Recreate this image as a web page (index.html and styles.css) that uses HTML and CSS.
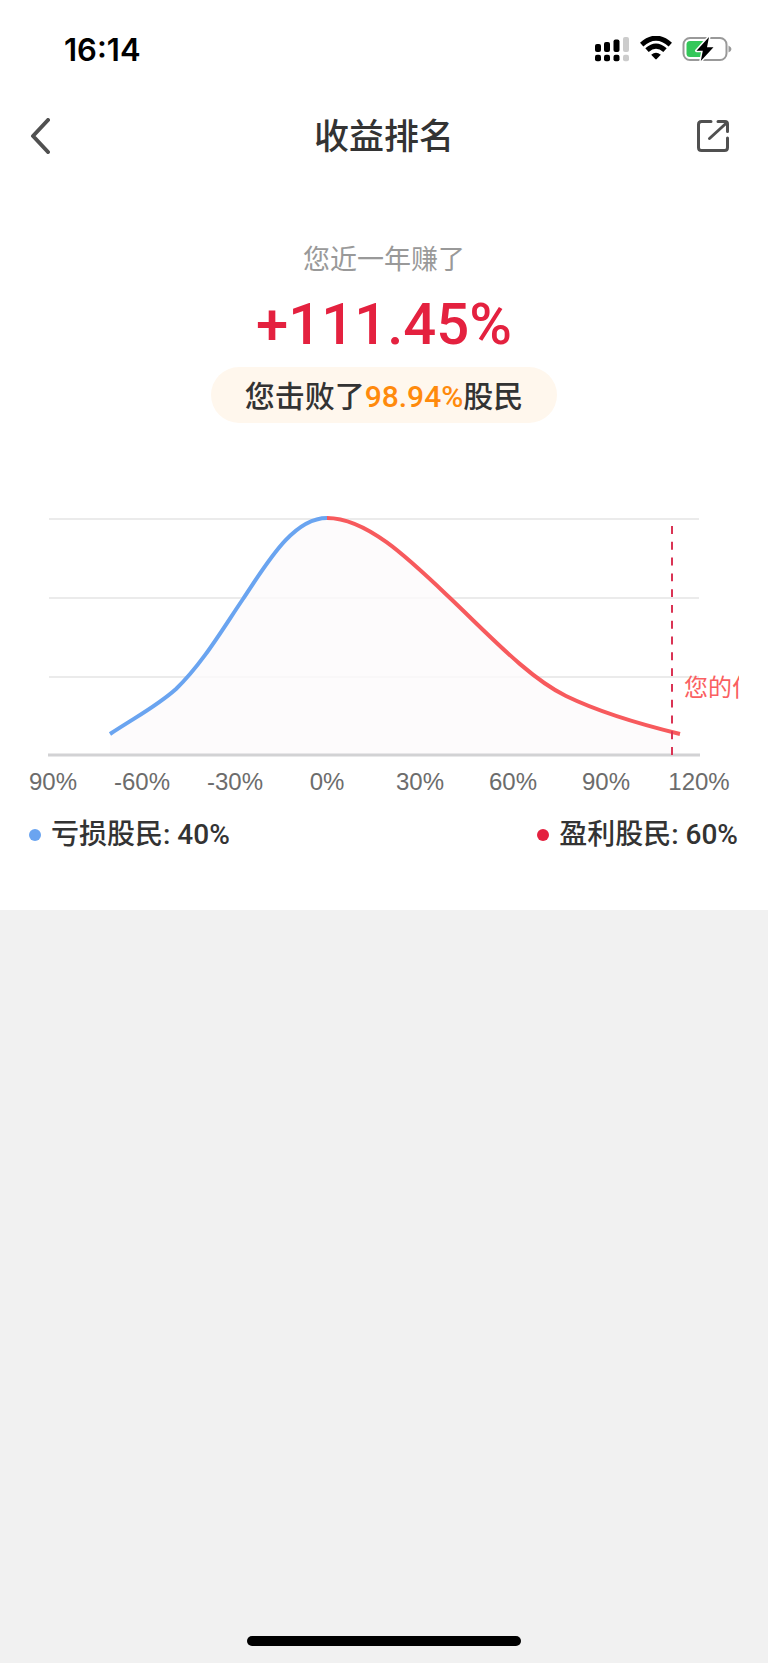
FILE: index.html
```html
<!DOCTYPE html>
<html lang="zh-CN">
<head>
    <meta charset="UTF-8">
    <meta name="viewport" content="width=device-width, initial-scale=1.0">
    <title>收益排名</title>
    <link rel="stylesheet" href="styles.css">
</head>
<body>

    <div class="card">
        <!-- Status bar -->
        <div class="status-bar">
            <span class="time">16:14</span>
            <div class="status-icons">
                <svg width="35" height="26" viewBox="0 0 35 26">
                    <rect x="0" y="8" width="6" height="8" rx="2"/>
                    <rect x="9" y="6" width="6" height="10" rx="2"/>
                    <rect x="18.5" y="3.5" width="6" height="12.5" rx="2"/>
                    <rect class="dim" x="28" y="1" width="6" height="15" rx="2"/>
                    <rect x="0" y="18.7" width="6" height="6.5" rx="2"/>
                    <rect x="9" y="18.7" width="6" height="6.5" rx="2"/>
                    <rect x="18.5" y="18.7" width="6" height="6.5" rx="2"/>
                    <rect class="dim" x="28" y="18.7" width="6" height="6.5" rx="2"/>
                </svg>
                <svg width="32" height="26" viewBox="0 0 32 26">
                    <path class="wifi" d="M1.7 8.6 Q16 -4.2 30.3 8.6"/>
                    <path class="wifi" d="M7 14.2 Q16 6 25 14.2"/>
                    <path d="M11.2 18.8 Q16 14.7 20.8 18.8 L16.7 23.1 Q16 23.7 15.3 23.1 Z"/>
                </svg>
                <svg width="50" height="26" viewBox="0 0 50 26">
                    <rect class="shell" x="1.5" y="2" width="43" height="22" rx="6.5"/>
                    <path class="nub" d="M46.5 9.5 Q49.5 11 49.5 13 Q49.5 15 46.5 16.5 Z"/>
                    <rect class="charge" x="4.5" y="5" width="19" height="16" rx="3.5"/>
                    <path class="bolt" d="M27 1 L14.5 14.7 H20.8 L18.8 25 L31.5 11.3 H25 Z"/>
                </svg>
            </div>
        </div>

        <!-- Title bar -->
        <header class="navbar">
            <a href="#" class="nav-link" aria-label="返回">
                <svg width="20" height="36" viewBox="0 0 20 36">
                    <path class="back" d="M18 2 L3 18 L18 34"/>
                </svg>
            </a>
            <h1>收益排名</h1>
            <button class="nav-link" type="button" aria-label="分享">
                <svg width="34" height="34" viewBox="0 0 34 34">
                    <path d="M15 2.5 H5.5 Q2.5 2.5 2.5 5.5 V28.5 Q2.5 31.5 5.5 31.5 H28.5 Q31.5 31.5 31.5 28.5 V19"/>
                    <path d="M22 2.5 H29 Q31.5 2.5 31.5 5 V12.5 M31 3.5 L13.5 19.5"/>
                </svg>
            </button>
        </header>

        <!-- Result -->
        <div class="summary">
            <p class="subtitle">您近一年赚了</p>
            <div class="rate">+111.45%</div>
            <div class="badge">您击败了<span>98.94%</span>股民</div>
        </div>

        <!-- Distribution chart -->
        <svg class="chart" viewBox="0 0 710 300">
            <path class="grid" d="M20 19 H670 M20 98 H670 M20 177 H670"/>
            <path class="area" d="M81 255 V234 C110 215 128 206 147 189 C173 164 193 130 214 99 C238 63 264 18 298 18 C338 18 380 59 421 98 C461 136 500 178 537 196 C570 212 610 224 651 234 V255 Z"/>
            <path class="axis" d="M19 255 H671"/>
            <path class="line loss" d="M81 234 C110 215 128 206 147 189 C173 164 193 130 214 99 C238 63 264 18 298 18"/>
            <path class="line profit" d="M298 18 C338 18 380 59 421 98 C461 136 500 178 537 196 C570 212 610 224 651 234"/>
            <path class="marker" pathLength="29" d="M643 26 V255"/>
            <text class="marker-label" x="655" y="196">您的位置</text>
            <g class="ticks">
                <text x="20" y="290">-90%</text>
                <text x="113" y="290">-60%</text>
                <text x="206" y="290">-30%</text>
                <text x="298" y="290">0%</text>
                <text x="391" y="290">30%</text>
                <text x="484" y="290">60%</text>
                <text x="577" y="290">90%</text>
                <text x="670" y="290">120%</text>
            </g>
        </svg>

        <div class="legend">
            <div class="legend-item"><i class="dot dot-loss"></i>亏损股民: 40%</div>
            <div class="legend-item"><i class="dot dot-profit"></i>盈利股民: 60%</div>
        </div>
    </div>

    <div class="home-indicator"></div>

</body>
</html>
```
FILE: styles.css
```css
* {
    box-sizing: border-box;
}

body {
    margin: 0;
    min-height: 100vh;
    display: flex;
    flex-direction: column;
    justify-content: space-between;
    background-color: #f1f1f1;
    color: #333;
    font-family: Roboto, "Noto Sans CJK SC", sans-serif;
}

.card {
    background-color: #fff;
    padding-bottom: 55px;
}

/* Status bar */
.status-bar {
    display: flex;
    justify-content: space-between;
    align-items: center;
    height: 98px;
    padding: 0 36px 0 64px;
}

.time {
    color: #000;
    font-family: Inter, sans-serif;
    font-size: 31px;
    font-weight: 600;
}

.status-icons {
    display: flex;
    gap: 10px;
}

.status-icons .dim {
    fill: #ccc;
}

.wifi {
    fill: none;
    stroke: #000;
    stroke-width: 5;
}

.shell {
    fill: none;
    stroke: #999;
    stroke-width: 2;
}

.nub {
    fill: #999;
}

.charge {
    fill: #34c759;
}

.bolt {
    stroke: #fff;
    stroke-width: 3;
    stroke-linejoin: round;
    paint-order: stroke;
}

/* Title bar */
.navbar {
    display: grid;
    grid-template-columns: 1fr auto 1fr;
    align-items: center;
    height: 76px;
    padding: 0 38px 0 30px;
}

.navbar h1 {
    margin: 0;
    padding: 4px 0 0 8px;
    font-size: 35px;
    font-weight: 500;
    line-height: 48px;
}

.nav-link {
    display: flex;
    justify-self: start;
    padding: 0;
    border: none;
    background: none;
    cursor: pointer;
}

.nav-link:last-child {
    justify-self: end;
}

.nav-link svg {
    fill: none;
    stroke: #505050;
    stroke-width: 3;
    stroke-linecap: round;
    stroke-linejoin: round;
}

.nav-link .back {
    stroke-width: 4;
}

/* Result */
.summary {
    display: flex;
    flex-direction: column;
    align-items: center;
    padding-top: 65px;
}

.subtitle {
    margin: 0;
    color: #999;
    font-size: 27px;
    line-height: 42px;
}

.rate {
    color: #e4213f;
    font-size: 58px;
    font-weight: 500;
    line-height: 86px;
}

.badge {
    padding: 3px 34px 0;
    border-radius: 28px;
    background-color: #fff7ed;
    font-size: 30px;
    font-weight: 500;
    line-height: 53px;
}

.badge span {
    color: #ff8a0c;
}

/* Chart */
.chart {
    display: block;
    width: calc(100% - 58px);
    margin: 77px 29px 0;
    overflow: hidden;
}

.grid {
    stroke: #ebebeb;
    stroke-width: 2;
}

.axis {
    stroke: #d2d2d4;
    stroke-width: 3;
}

.area {
    fill: #fdfafb;
    fill-opacity: 0.8;
}

.line {
    fill: none;
    stroke-width: 4;
}

.loss {
    stroke: #6aa4f0;
}

.profit {
    stroke: #f75a5d;
}

.marker {
    stroke: #da3354;
    stroke-width: 2;
    stroke-dasharray: 1 1;
}

.marker-label {
    fill: #fa5f61;
    font-family: "Noto Sans CJK SC", sans-serif;
    font-size: 24px;
}

.ticks {
    fill: #6c6c6c;
    font-family: "Liberation Sans", sans-serif;
    font-size: 24px;
    text-anchor: middle;
}

/* Legend */
.legend {
    display: flex;
    justify-content: space-between;
    padding: 15px 30px 0 29px;
    font-size: 28px;
    font-weight: 500;
    line-height: 40px;
}

.legend-item {
    display: flex;
    align-items: center;
    gap: 10px;
}

.dot {
    width: 12px;
    height: 12px;
    border-radius: 50%;
}

.dot-loss {
    background-color: #6aa4f0;
}

.dot-profit {
    background-color: #e4213f;
}

.home-indicator {
    width: 274px;
    height: 10px;
    margin: 0 auto 17px;
    border-radius: 5px;
    background-color: #000;
}
```
